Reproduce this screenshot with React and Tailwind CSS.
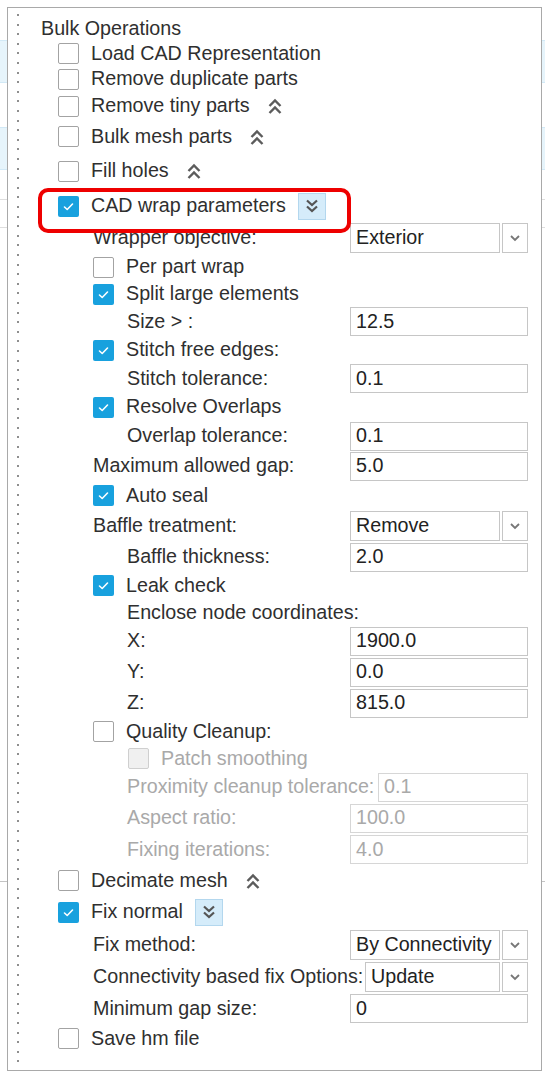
import React from 'react';
import clsx from 'clsx';

const font = { fontFamily: '"Liberation Sans", Arial, sans-serif' };

function Check({ checked, disabled }) {
  return (
    <span
      className={clsx(
        'w-[21px] h-[21px] shrink-0 rounded-[2px] flex items-center justify-center',
        checked && 'bg-[#18a1de]',
        !checked && disabled && 'border border-[#cfcfcf] bg-[#f0f0f0]',
        !checked && !disabled && 'border border-[#a3a3a3] bg-white'
      )}
    >
      {checked && (
        <svg width="21" height="21" viewBox="0 0 21 21">
          <polyline points="6.5,11 9.2,13.5 14.5,8" fill="none" stroke="#fff" strokeWidth="1.6" strokeLinecap="round" strokeLinejoin="round" />
        </svg>
      )}
    </span>
  );
}

function ChevronsUp() {
  return (
    <svg width="16" height="18" viewBox="0 0 16 18" className="shrink-0">
      <polyline points="2.5,8 8,2.5 13.5,8" fill="none" stroke="#5c5c5c" strokeWidth="2.4" />
      <polyline points="2.5,15 8,9.5 13.5,15" fill="none" stroke="#5c5c5c" strokeWidth="2.4" />
    </svg>
  );
}

function ChevronsDownBox() {
  return (
    <span className="w-[28px] h-[27px] shrink-0 flex items-center justify-center bg-[#d5ecfa] border border-[#b3d7ee]">
      <svg width="14" height="16" viewBox="0 0 14 16">
        <polyline points="2,2.5 7,7 12,2.5" fill="none" stroke="#555" strokeWidth="2.2" />
        <polyline points="2,8.5 7,13 12,8.5" fill="none" stroke="#555" strokeWidth="2.2" />
      </svg>
    </span>
  );
}

function Field({ value, disabled, w = 'w-[178px]' }) {
  return (
    <div
      className={clsx(
        'h-[29px] shrink-0 border flex items-center pl-[5px] bg-white',
        w,
        disabled ? 'border-[#d6d6d6] text-[#a9a9a9]' : 'border-[#c6c6c6] text-[#222]'
      )}
    >
      {value}
    </div>
  );
}

function Select({ value, w = 'w-[150px]' }) {
  return (
    <div className="flex shrink-0 gap-[2px] h-[30px]">
      <div className={clsx('h-full border border-[#c6c6c6] flex items-center pl-[5px] text-[#222]', w)}>{value}</div>
      <div className="w-[26px] h-full border border-[#c6c6c6] flex items-center justify-center">
        <svg width="12" height="8" viewBox="0 0 12 8">
          <polyline points="2,2 6,6 10,2" fill="none" stroke="#777" strokeWidth="1.8" />
        </svg>
      </div>
    </div>
  );
}

function CheckRow({ h, pl, checked, disabled, label, after }) {
  return (
    <div className={clsx('flex items-center', h, pl)}>
      <Check checked={checked} disabled={disabled} />
      <span className={clsx('whitespace-nowrap pl-[12px]', disabled && 'text-[#a9a9a9]')}>{label}</span>
      {after}
    </div>
  );
}

function FieldRow({ h, pl, label, disabled, children }) {
  return (
    <div className={clsx('flex items-center justify-between', h, pl)}>
      <span className={clsx('whitespace-nowrap', disabled && 'text-[#a9a9a9]')}>{label}</span>
      {children}
    </div>
  );
}

function SideStrip() {
  return (
    <div className="flex flex-col w-full">
      <div className="h-[40px]" />
      <div className="h-[43px] bg-[#e6f4fb] border-y border-[#d2e9f6]" />
      <div className="h-[44px]" />
      <div className="h-[43px] bg-[#e6f4fb] border-y border-[#d2e9f6]" />
      <div className="h-[30px] border-b border-[#dedede]" />
      <div className="h-[28px] border-b border-[#dedede]" />
      <div className="h-[654px] border-b border-[#c4c4c4]" />
    </div>
  );
}

const up = <span className="ml-[17px] mt-[2px]"><ChevronsUp /></span>;
const down = <span className="ml-[12px]"><ChevronsDownBox /></span>;

export default function App() {
  return (
    <div className="w-[545px] h-[1073px] bg-white relative overflow-hidden text-[19.7px] text-[#2f2f2f] leading-none" style={font}>
      <div className="absolute left-0 top-0 w-[7px]"><SideStrip /></div>
      <div className="absolute right-0 top-0 w-[3px]"><SideStrip /></div>

      <div className="ml-[7px] mt-[7px] w-[535px] h-[1064px] border border-[#a9a9a9] bg-white relative">
        {/* tree connector */}
        <div className="absolute left-[9px] top-[6px] bottom-[8px] w-[2px] bg-[repeating-linear-gradient(to_bottom,#8f8f8f_0px,#8f8f8f_2px,transparent_2px,transparent_9.6px)]" />
        {/* highlight annotation */}
        <div className="absolute left-[30px] top-[180px] w-[313px] h-[45px] border-4 border-[#ee0000] rounded-[10px]" />

        <div className="flex flex-col pt-[8px] pr-[13px]">
          <div className="flex items-center h-[25px] pl-[33px]">Bulk Operations</div>
          <CheckRow h="h-[25px]" pl="pl-[50px]" label="Load CAD Representation" />
          <CheckRow h="h-[26px]" pl="pl-[50px]" label="Remove duplicate parts" />
          <CheckRow h="h-[28px]" pl="pl-[50px]" label="Remove tiny parts" after={up} />
          <CheckRow h="h-[33px]" pl="pl-[50px]" label="Bulk mesh parts" after={up} />
          <CheckRow h="h-[36px]" pl="pl-[50px]" label="Fill holes" after={up} />
          <CheckRow h="h-[34px]" pl="pl-[50px]" checked label="CAD wrap parameters" after={down} />

          <FieldRow h="h-[30px]" pl="pl-[85px]" label="Wrapper objective:"><Select value="Exterior" /></FieldRow>
          <CheckRow h="h-[28px]" pl="pl-[85px]" label="Per part wrap" />
          <CheckRow h="h-[26px]" pl="pl-[85px]" checked label="Split large elements" />
          <FieldRow h="h-[29px]" pl="pl-[119px]" label="Size > :"><Field value="12.5" /></FieldRow>
          <CheckRow h="h-[28px]" pl="pl-[85px]" checked label="Stitch free edges:" />
          <FieldRow h="h-[29px]" pl="pl-[119px]" label="Stitch tolerance:"><Field value="0.1" /></FieldRow>
          <CheckRow h="h-[28px]" pl="pl-[85px]" checked label="Resolve Overlaps" />
          <FieldRow h="h-[30px]" pl="pl-[119px]" label="Overlap tolerance:"><Field value="0.1" /></FieldRow>
          <FieldRow h="h-[30px]" pl="pl-[85px]" label="Maximum allowed gap:"><Field value="5.0" /></FieldRow>
          <CheckRow h="h-[29px]" pl="pl-[85px]" checked label="Auto seal" />
          <FieldRow h="h-[32px]" pl="pl-[85px]" label="Baffle treatment:"><Select value="Remove" /></FieldRow>
          <FieldRow h="h-[30px]" pl="pl-[119px]" label="Baffle thickness:"><Field value="2.0" /></FieldRow>
          <CheckRow h="h-[27px]" pl="pl-[85px]" checked label="Leak check" />
          <div className="flex items-center h-[27px] pl-[119px]">Enclose node coordinates:</div>
          <FieldRow h="h-[30px]" pl="pl-[119px]" label="X:"><Field value="1900.0" /></FieldRow>
          <FieldRow h="h-[32px]" pl="pl-[119px]" label="Y:"><Field value="0.0" /></FieldRow>
          <FieldRow h="h-[30px]" pl="pl-[119px]" label="Z:"><Field value="815.0" /></FieldRow>
          <CheckRow h="h-[27px]" pl="pl-[85px]" label="Quality Cleanup:" />
          <CheckRow h="h-[27px]" pl="pl-[120px]" disabled label="Patch smoothing" />
          <FieldRow h="h-[30px]" pl="pl-[119px]" disabled label="Proximity cleanup tolerance:"><Field disabled w="w-[150px]" value="0.1" /></FieldRow>
          <FieldRow h="h-[32px]" pl="pl-[119px]" disabled label="Aspect ratio:"><Field disabled value="100.0" /></FieldRow>
          <FieldRow h="h-[31px]" pl="pl-[119px]" disabled label="Fixing iterations:"><Field disabled value="4.0" /></FieldRow>
          <CheckRow h="h-[31px]" pl="pl-[50px]" label="Decimate mesh" after={up} />
          <CheckRow h="h-[32px]" pl="pl-[50px]" checked label="Fix normal" after={down} />
          <FieldRow h="h-[33px]" pl="pl-[85px]" label="Fix method:"><Select value="By Connectivity" /></FieldRow>
          <FieldRow h="h-[32px]" pl="pl-[85px]" label="Connectivity based fix Options:"><Select w="w-[135px]" value="Update" /></FieldRow>
          <FieldRow h="h-[31px]" pl="pl-[85px]" label="Minimum gap size:"><Field value="0" /></FieldRow>
          <CheckRow h="h-[29px]" pl="pl-[50px]" label="Save hm file" />
        </div>
      </div>
    </div>
  );
}
